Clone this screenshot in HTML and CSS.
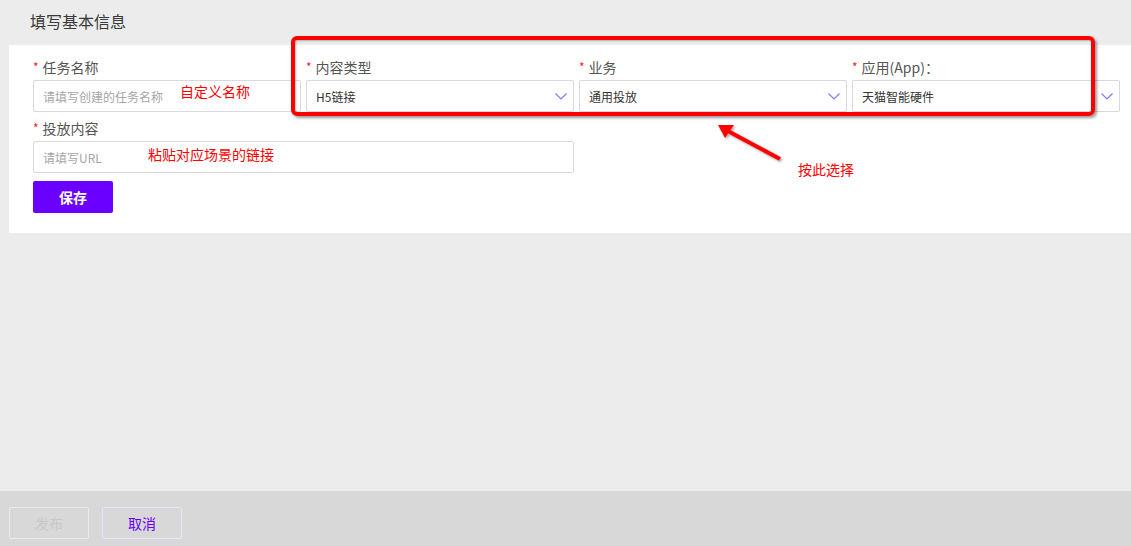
FILE: index.html
```html
<!DOCTYPE html>
<html lang="zh">
<head>
<meta charset="utf-8">
<title>填写基本信息</title>
<link rel="stylesheet" href="styles.css">
</head>
<body>
<div class="page">
  <div class="main">
    <div class="section-title">填写基本信息</div>
    <div class="card">
      <div class="grid">
        <div class="field">
          <label class="label"><span class="star">*</span>任务名称</label>
          <div class="input"><span class="placeholder">请填写创建的任务名称</span></div>
        </div>
        <div class="field">
          <label class="label"><span class="star">*</span>内容类型</label>
          <div class="input select"><span class="value">H5链接</span>
            <svg class="chev" width="12" height="7" viewBox="0 0 12 7"><path d="M0.5 0.5 L6 6 L11.5 0.5" fill="none" stroke="#8f72ff" stroke-width="1.2"/></svg>
          </div>
        </div>
        <div class="field">
          <label class="label"><span class="star">*</span>业务</label>
          <div class="input select"><span class="value">通用投放</span>
            <svg class="chev" width="12" height="7" viewBox="0 0 12 7"><path d="M0.5 0.5 L6 6 L11.5 0.5" fill="none" stroke="#8f72ff" stroke-width="1.2"/></svg>
          </div>
        </div>
        <div class="field">
          <label class="label"><span class="star">*</span>应用(App)：</label>
          <div class="input select"><span class="value">天猫智能硬件</span>
            <svg class="chev" width="12" height="7" viewBox="0 0 12 7"><path d="M0.5 0.5 L6 6 L11.5 0.5" fill="none" stroke="#8f72ff" stroke-width="1.2"/></svg>
          </div>
        </div>
        <div class="field wide">
          <label class="label"><span class="star">*</span>投放内容</label>
          <div class="input"><span class="placeholder">请填写URL</span></div>
        </div>
      </div>
      <button class="btn-primary">保存</button>
    </div>
  </div>
  <div class="footer">
    <button class="btn disabled">发布</button>
    <button class="btn cancel">取消</button>
  </div>

  <div class="note-box"></div>
  <div class="note note-name">自定义名称</div>
  <div class="note note-url">粘贴对应场景的链接</div>
  <div class="note note-select">按此选择</div>
  <svg class="arrow" width="80" height="50" viewBox="0 0 80 50">
    <defs>
      <filter id="sh" x="-20%" y="-20%" width="140%" height="140%">
        <feDropShadow dx="1.5" dy="1.5" stdDeviation="1" flood-color="#000" flood-opacity="0.35"/>
      </filter>
    </defs>
    <g filter="url(#sh)">
      <line x1="66" y1="38" x2="12" y2="9" stroke="#ff0000" stroke-width="4"/>
      <polygon points="4,4 20,4 11,17" fill="#ff0000"/>
    </g>
  </svg>
</div>
</body>
</html>
```

FILE: styles.css
```css
* { box-sizing: border-box; }
html, body { margin: 0; padding: 0; }
body {
  font-family: "Noto Sans CJK SC", "Noto Sans", sans-serif;
  background: #ececec;
  color: #333;
}
.page {
  position: relative;
  width: 1131px;
  height: 546px;
  display: flex;
  flex-direction: column;
  overflow: hidden;
}
.main {
  flex: 1;
  padding-left: 9px;
}
.section-title {
  height: 45px;
  line-height: 42px;
  padding-left: 21px;
  font-size: 16px;
  color: #3a3a3a;
}
.card {
  background: #fff;
  height: 188px;
  padding: 11px 24px 20px 24px;
}
.grid {
  display: grid;
  grid-template-columns: repeat(4, 268px);
  column-gap: 5px;
  row-gap: 5px;
}
.field.wide { grid-column: span 2; }
.label {
  display: block;
  height: 22px;
  line-height: 22px;
  font-size: 14px;
  color: #555;
  margin-bottom: 2px;
}
.star {
  color: #f5222d;
  font-size: 12px;
  margin-right: 4px;
  position: relative;
  top: -1px;
}
.input {
  height: 32px;
  border: 1px solid #d9d9d9;
  border-radius: 2px;
  display: flex;
  align-items: center;
  padding: 0 9px;
  font-size: 12px;
  background: #fff;
}
.placeholder { color: #a6a6a6; }
.value { color: #333; }
.select { justify-content: space-between; padding-right: 6px; }
.chev { display: block; margin-top: 1px; }
.btn-primary {
  margin-top: 8px;
  width: 80px;
  height: 32px;
  border: none;
  border-radius: 2px;
  background: #6a00ff;
  color: #fff;
  font-family: inherit;
  font-size: 14px;
  font-weight: 700;
}
.footer {
  height: 55px;
  background: #d8d8d8;
  padding: 16px 0 0 9px;
  display: flex;
  gap: 13px;
  align-items: flex-start;
}
.btn {
  width: 80px;
  height: 32px;
  background: transparent;
  border: 1px solid #e6e6e6;
  border-radius: 2px;
  font-family: inherit;
  font-size: 14px;
}
.btn.disabled { color: #c8c8c8; border-color: #ebebeb; }
.btn.cancel { color: #6a00ff; border-color: #e8e4fb; }

.note-box {
  position: absolute;
  left: 291px;
  top: 36px;
  width: 804px;
  height: 80px;
  border: 4px solid #ff0000;
  border-radius: 6px;
  box-shadow: 2px 2px 3px rgba(0,0,0,0.4), inset 1px 1px 2px rgba(0,0,0,0.25);
}
.note {
  position: absolute;
  color: #ff0000;
  font-size: 14px;
  line-height: 16px;
  font-family: "Noto Sans CJK SC", sans-serif;
}
.note-name { left: 180px; top: 83px; }
.note-url { left: 148px; top: 146px; }
.note-select { left: 798px; top: 161px; }
.arrow {
  position: absolute;
  left: 714px;
  top: 121px;
}
```
